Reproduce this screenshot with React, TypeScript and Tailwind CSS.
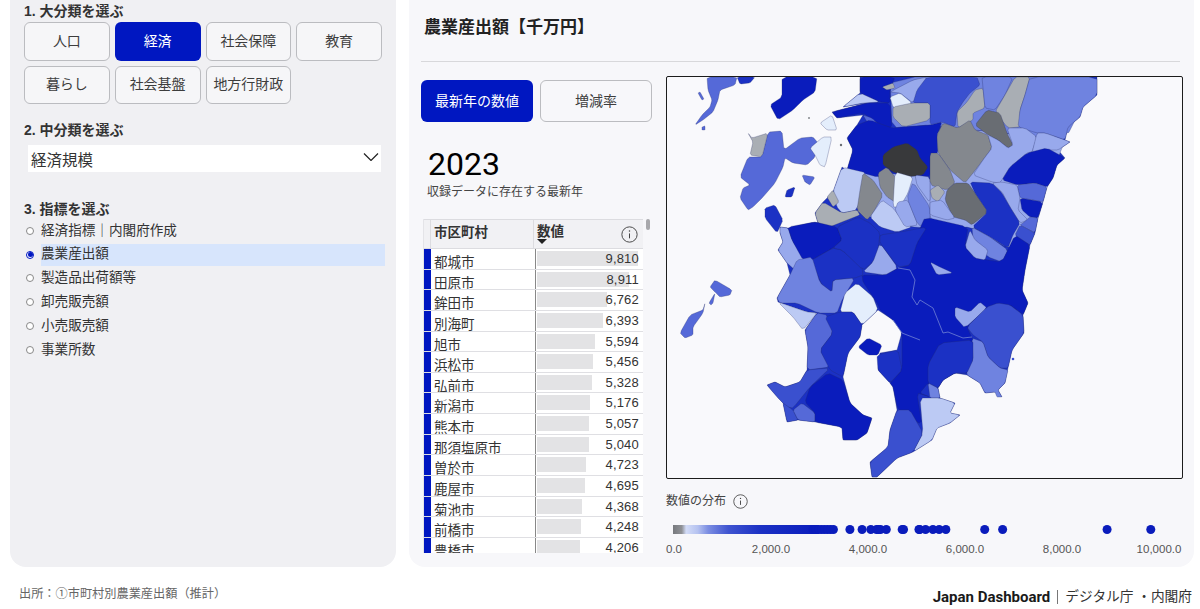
import React from "react";

const FONT = "font-['Liberation_Sans','Noto_Sans_CJK_JP',sans-serif]";

const categories = ["人口", "経済", "社会保障", "教育", "暮らし", "社会基盤", "地方行財政"];
const indicators = ["経済指標｜内閣府作成", "農業産出額", "製造品出荷額等", "卸売販売額", "小売販売額", "事業所数"];
const rows: [string, number][] = [
  ["都城市", 9810],
  ["田原市", 8911],
  ["鉾田市", 6762],
  ["別海町", 6393],
  ["旭市", 5594],
  ["浜松市", 5456],
  ["弘前市", 5328],
  ["新潟市", 5176],
  ["熊本市", 5057],
  ["那須塩原市", 5040],
  ["曽於市", 4723],
  ["鹿屋市", 4695],
  ["菊池市", 4368],
  ["前橋市", 4248],
  ["豊橋市", 4206],
];

const c1 = "#0a1cbc";
const c2 = "#1b31c4";
const c3 = "#3a50cf";
const c4 = "#5569d8";
const c5 = "#6f83e0";
const c6 = "#98a9ec";
const c7 = "#bccaf4";
const c8 = "#e4eefc";
const g1 = "#38393b";
const g2 = "#696d73";
const g3 = "#84888e";
const g4 = "#a9aeb4";

// 本土の輪郭 (隙間埋め)
const land =
  "860,77 1097,77 1097,95 1083,107 1080,117 1068,127 1065,140 1070,142 1058,150 1065,158 1057,165 1053,178 1047,187 1043,202 1038,218 1035,233 1030,245 1025,270 1022,290 1028,303 1023,315 1024,333 1012,350 1008,368 1005,383 998,390 1002,397 995,392 985,393 980,383 967,375 955,373 943,380 938,388 940,398 955,403 950,413 960,415 950,423 937,428 932,440 913,452 897,458 877,477 872,477 870,462 888,447 890,430 897,410 893,387 890,383 878,370 880,353 897,350 902,332 893,320 878,310 862,325 860,337 848,353 843,377 850,403 863,415 872,418 867,433 857,440 843,440 842,427 815,422 798,420 787,422 783,403 767,385 775,382 785,387 800,382 807,370 808,347 805,330 817,313 807,312 778,302 777,298 790,275 787,263 778,250 783,242 780,233 780,227 788,228 815,222 818,223 815,213 823,202 833,192 842,167 847,170 853,150 847,138 857,125 863,115 837,118 832,112 867,103 843,107 860,93";

// 地図の市区町村 (ページ座標)
const regions: [string, string][] = [
  [c6, "847,170 930,177 945,200 930,228 912,227 870,217 857,210"],
  [c6, "930,125 1065,140 1047,187 1038,218 1030,245 1008,248 972,227 930,228"],
  [c5, "890,77 1097,77 1065,140 930,125 892,128"],
  [c4, "707,77 737,77 735,85 720,90 718,100 713,112 703,120 695,125 702,115 710,107 712,100 708,90"],
  [c2, "737,77 755,77 750,83 740,84"],
  [c1, "782,77 817,77 815,92 803,100 793,110 778,120 770,105 782,97"],
  [c1, "860,77 895,77 890,90 890,103 880,102 860,93"],
  [g4, "882,87 893,83 895,88 887,90"],
  [c7, "843,107 860,93 880,102 863,103"],
  [c1, "832,112 867,103 890,103 892,128 880,125 863,113 837,118"],
  [c4, "863,115 872,118 882,128 877,135 870,127"],
  [c1, "870,120 892,128 903,127 930,125 942,122 937,135 938,153 930,155 930,177 915,175 895,172 877,177 863,173 847,170 853,150 847,138 857,125"],
  [g1, "883,155 893,147 907,143 917,150 920,158 928,167 923,175 907,177 893,172 883,165"],
  [c4, "768,132 782,131 784,150 800,138 813,137 818,143 815,157 807,165 793,163 785,158 783,167 775,183 763,197 753,207 748,210 740,198 743,188 750,185 740,177 748,157 762,157"],
  [g4, "748,133 752,138 768,133 762,157 750,155 753,142"],
  [c8, "810,148 823,137 832,137 825,167 820,165 815,155"],
  [c8, "820,123 832,115 837,130 827,130"],
  [c4, "802,175 815,177 810,185 805,182"],
  [c2, "787,190 795,187 792,197 785,197"],
  [c2, "765,208 775,205 783,220 777,233 765,218"],
  [c7, "833,192 842,167 867,173 857,210 842,213 837,207"],
  [g4, "827,197 833,190 839,202 833,207"],
  [g4, "815,213 823,202 842,213 857,210 860,215 847,220 827,228 818,223"],
  [g3, "863,173 873,180 883,195 873,213 867,220 857,210 860,190"],
  [g3, "878,173 887,167 900,183 895,202 887,197 880,187"],
  [c7, "870,217 882,200 893,208 900,217 912,227 897,232 880,227"],
  [c8, "895,172 913,177 908,193 900,207 893,207"],
  [c6, "898,202 908,200 918,225 905,227 895,210"],
  [c5, "913,182 930,207 930,228 918,225 907,198"],
  [c6, "915,175 930,177 930,203 917,185"],
  // 上部
  [c3, "913,90 927,77 977,77 980,85 970,93 963,102 957,112 955,127 942,122 930,125 930,103 913,103"],
  [c6, "890,92 913,80 927,77 917,90 913,103 900,93"],
  [c8, "890,97 900,93 912,103 903,113 893,107"],
  [g4, "893,107 912,103 930,103 930,120 903,127 893,117"],
  [g4, "975,90 983,88 985,108 973,113 973,120 958,128 957,112 967,102"],
  [c5, "982,77 1013,77 1005,95 995,110 985,108 983,88"],
  [g4, "1015,77 1030,77 1025,95 1020,110 1020,127 1008,128 995,112 1005,95"],
  [c5, "1030,77 1097,77 1097,95 1083,107 1080,117 1068,127 1065,140 1045,133 1037,133 1018,127 1020,110 1025,95"],
  [g2, "975,125 987,110 1000,113 1007,133 1013,145 1008,148 998,140 988,135"],
  [g3, "937,135 943,123 958,128 970,120 975,130 988,135 992,148 983,160 973,173 965,183 950,170 938,153"],
  [g3, "930,153 938,153 950,170 955,183 947,190 930,185"],
  [c6, "988,135 998,140 1008,148 1013,145 1007,128 1025,128 1037,137 1032,152 1027,153 1010,167 1000,183 992,182 973,175 983,160 992,148"],
  [c6, "1037,133 1045,133 1065,140 1070,142 1058,150 1047,150 1032,153"],
  [c1, "1047,148 1065,158 1057,165 1053,178 1047,187 1035,183 1018,185 1002,180 1010,167 1027,153"],
  [c4, "1017,185 1035,183 1047,187 1043,202 1033,200 1020,198"],
  [c1, "1020,198 1043,202 1038,218 1030,217 1022,210"],
  [c6, "992,183 1002,182 1017,185 1020,198 1018,210 1028,220 1020,223 1010,207 1002,192"],
  [c4, "1023,223 1030,217 1038,218 1035,233 1020,225"],
  [c3, "1015,235 1020,225 1035,233 1030,245 1023,242"],
  [g2, "947,190 955,183 968,183 975,193 988,212 972,225 965,220 953,217 945,200"],
  [g4, "930,190 938,185 945,192 938,202 932,198"],
  [c2, "970,182 992,183 1002,193 1010,207 1020,223 1013,235 1008,248 990,237 972,227 988,212 975,193"],
  [c5, "972,227 990,237 1008,250 1002,262 988,257 973,240"],
  [c6, "930,202 942,200 955,218 947,220 930,215"],
  // 南東部
  [c1, "917,235 925,217 968,227 965,247 975,258 1002,262 1015,235 1030,245 1025,270 1022,290 1028,303 1023,315 1010,305 987,307 967,327 973,340 973,360 967,373 955,373 943,380 938,388 928,383 920,393 930,397 917,393 922,425 898,410 893,387 890,383 902,370 902,333 893,320 880,310 877,303 863,282 862,275 885,275 898,268 910,265"],
  [c6, "965,247 970,230 975,240 988,250 985,260 975,258"],
  [c6, "930,262 940,267 953,273 937,275"],
  [c6, "955,307 970,312 980,302 987,308 965,328 955,317"],
  [c3, "967,327 987,307 998,303 1010,305 1023,315 1024,333 1012,350 1008,368 1000,368 988,357 983,342 973,335"],
  [c5, "972,338 983,342 988,357 1000,368 1008,370 1005,383 998,390 1002,397 997,397 995,392 985,393 980,383 967,375 967,368 973,360"],
  [c2, "940,343 973,340 973,360 967,373 955,373 943,380 938,388 928,383 928,365"],
  [c5, "928,383 938,388 940,398 930,398"],
  [c7, "920,398 940,398 955,403 950,413 960,415 950,423 937,428 932,440 913,452 923,433"],
  [c3, "897,410 910,410 923,433 913,452 897,458 877,477 872,477 870,462 888,447 890,430"],
  // 中部
  [c6, "780,227 788,228 792,240 805,260 795,270 787,263 778,250 783,242 780,233"],
  [c1, "788,227 815,222 837,227 842,240 833,248 812,260 803,260 792,240"],
  [c2, "812,260 833,248 842,250 862,267 863,275 855,278 833,280 832,292 822,285 812,263"],
  [c2, "837,227 858,217 870,223 880,233 878,252 873,262 863,270 842,250 833,248 842,240"],
  [c6, "880,243 898,268 885,275 863,272 873,262"],
  [c2, "880,235 900,232 927,227 917,243 910,265 898,267 880,243"],
  [c5, "777,298 790,275 797,260 812,257 820,283 832,292 833,280 855,278 842,300 837,313 818,313 797,303 780,303"],
  [c8, "840,312 845,293 857,283 873,297 878,310 862,325 853,312"],
  [c7, "778,302 807,312 817,313 803,330 793,317"],
  [c4, "817,313 827,315 833,333 820,350 830,367 807,370 808,347 805,330"],
  [c2, "825,317 840,312 853,312 862,325 860,337 848,353 843,377 830,370 820,350 833,333"],
  [c3, "807,370 830,368 810,387 793,408 787,407 777,397 767,385 775,382 785,387 800,382"],
  [c3, "783,403 793,410 798,420 787,422"],
  [c4, "793,410 802,403 815,413 815,422 798,420"],
  [c1, "828,373 843,380 850,403 863,415 872,418 867,433 857,440 843,440 842,427 815,422 815,413 805,402 810,387"],
  [c1, "858,347 868,338 882,345 878,355 868,355"],
  [c2, "877,355 898,350 902,370 890,383 878,370"],
  // 離島
  [c4, "710,287 715,280 732,290 730,295 720,297 715,292"],
  [c4, "709,303 715,293 713,303 711,305"],
  [c4, "680,333 690,315 703,310 705,303 703,313 693,327 693,335 685,338"],
  [c4, "698,93 700,92 704,99 702,100"],
  [c4, "702,127 705,126 705,130 702,130"],
];

const rivers = [
  "920,300 933,308 943,333 948,332 963,338 972,337",
  "898,268 910,270 915,280 912,297 917,305 920,300",
  "893,320 902,333 920,340",
];

// 角を少し丸める
function smooth(points: string) {
  const p = points.split(" ").map((s) => s.split(",").map(Number));
  const out: string[] = [];
  p.forEach((a, i) => {
    const b = p[(i + 1) % p.length];
    out.push(`${a[0] * 0.88 + b[0] * 0.12},${a[1] * 0.88 + b[1] * 0.12}`);
    out.push(`${a[0] * 0.12 + b[0] * 0.88},${a[1] * 0.12 + b[1] * 0.88}`);
  });
  return out.join(" ");
}

const dots = [3620, 3870, 4050, 4168, 4206, 4248, 4368, 4695, 4723, 5040, 5057, 5176, 5328, 5456, 5594, 6393, 6762, 8911, 9810];
const denseDots = [2860, 2920, 2980, 3040, 3100, 3160, 3220, 3280];
const ticks = ["0.0", "2,000.0", "4,000.0", "6,000.0", "8,000.0", "10,000.0"];

function InfoIcon({ className }: { className: string }) {
  return (
    <svg viewBox="0 0 16 16" className={className} fill="none" stroke="#444">
      <circle cx="8" cy="8" r="7.2" strokeWidth="0.9" />
      <path d="M8 7v4.6" strokeWidth="1" />
      <circle cx="8" cy="4.7" r="0.7" fill="#444" stroke="none" />
    </svg>
  );
}

function CategoryButtons() {
  return (
    <div className="grid grid-cols-4 gap-[5px]">
      {categories.map((name) => (
        <button
          key={name}
          className={
            name === "経済"
              ? "h-[38.5px] rounded-md bg-[#0017c1] text-[14px] text-white"
              : "h-[38.5px] rounded-md border border-[#bbbcc0] bg-[#f6f6f8] text-[14px] text-[#3d3d3d]"
          }
        >
          {name}
        </button>
      ))}
    </div>
  );
}

function IndicatorList() {
  return (
    <ul className="mt-[1px]">
      {indicators.map((name) => {
        const active = name === "農業産出額";
        return (
          <li key={name} className="flex h-[23.8px] items-center">
            <span className="flex w-[17px] shrink-0 justify-start pl-[2px]">
              <span
                className={
                  active
                    ? "flex size-[8px] items-center justify-center rounded-full border border-[#0017c1] bg-white"
                    : "size-[8px] rounded-full border border-[#888] bg-white"
                }
              >
                {active && <span className="size-[5px] rounded-full bg-[#0017c1]" />}
              </span>
            </span>
            <span
              className={
                active
                  ? "flex h-[22px] flex-1 items-center bg-[#d7e5fc] text-[13.6px] text-[#333]"
                  : "flex h-[22px] flex-1 items-center text-[13.6px] text-[#333]"
              }
            >
              {name}
            </span>
          </li>
        );
      })}
    </ul>
  );
}

function Sidebar() {
  return (
    <aside className="h-[567px] w-[386px] shrink-0 rounded-b-2xl bg-[#f0f0f3] pl-[14px] pr-[11px] pt-[2px] text-[#333]">
      <p className="mb-[2px] h-[18px] text-[14px] leading-[18px] font-bold">1. 大分類を選ぶ</p>
      <div className="pr-[3px]">
        <CategoryButtons />
      </div>
      <p className="mt-[18px] h-[17px] text-[14px] leading-[17px] font-bold">2. 中分類を選ぶ</p>
      <div className="mt-[6px] ml-[4px] mr-[4px] flex h-[27px] items-center justify-between bg-white pl-[3px] pr-[2px]">
        <span className="pt-[4px] text-[15.5px] text-[#333]">経済規模</span>
        <svg viewBox="0 0 16 8" className="mb-[3px] h-[8px] w-[16px]" fill="none" stroke="#222" strokeWidth="1.2">
          <path d="M1 .5l7 7 7-7" />
        </svg>
      </div>
      <p className="mt-[28px] h-[18px] text-[14px] leading-[18px] font-bold">3. 指標を選ぶ</p>
      <IndicatorList />
    </aside>
  );
}

function DataTable() {
  return (
    <div className="relative mt-[18px] h-[334px] w-[230px] overflow-hidden">
      <div className="ml-[2px] w-[220px] border-l border-[#e4e4e8] text-[#333]">
        <div className="flex h-[30px] border-t border-b border-[#dcdce0] bg-[#f1f1f4]">
          <div className="w-[7px] border-r border-[#dcdce0]" />
          <div className="w-[103px] border-r border-[#dcdce0] pl-[3px] pt-[3px] text-[13.5px] font-bold">市区町村</div>
          <div className="relative flex-1 pl-[3px] pt-[2px] text-[13.5px] font-bold">
            数値
            <span className="absolute left-[3px] top-[19px] h-0 w-0 border-x-[5px] border-t-[5px] border-x-transparent border-t-[#222]" />
            <InfoIcon className="absolute right-[5px] top-[6px] size-[17px]" />
          </div>
        </div>
        {rows.map(([city, value]) => (
          <div key={city} className="flex h-[20.64px] border-b border-[#dfdfe3] bg-white">
            <div className="w-[7px] bg-[#0017c1]" />
            <div className="w-[104px] overflow-hidden pl-[3px] pt-[5px] text-[13.5px] leading-[18px] whitespace-nowrap">{city}</div>
            <div className="relative flex-1 border-l border-[#888]">
              <div className="absolute left-[1px] top-[2px] h-[15px] bg-[#e3e3e5]" style={{ width: value * 0.0103 }} />
              <span className="absolute right-[4px] top-[1px] text-[13px] leading-[17px] tracking-[0.2px]">{value.toLocaleString("en-US")}</span>
            </div>
          </div>
        ))}
      </div>
      <div className="absolute right-[1px] top-0 h-[11px] w-[4px] rounded-full bg-[#a8a8ac]" />
    </div>
  );
}

function JapanMap() {
  return (
    <div className="h-[403px] w-[517px] overflow-hidden rounded-[2px] border border-[#1c1c1c] bg-[#f9f9fc]">
      <svg viewBox="667 77 515 401" className="h-full w-full">
        <polygon points={land} fill={c2} stroke="#232a66" strokeOpacity="0.55" strokeWidth="0.5" />
        {regions.map(([fill, points], i) => (
          <polygon key={i} points={smooth(points)} fill={fill} stroke="#232a66" strokeOpacity="0.55" strokeWidth="0.5" strokeLinejoin="round" />
        ))}
        {rivers.map((points) => (
          <polyline key={points} points={points} fill="none" stroke="#8090d8" strokeWidth="0.7" />
        ))}
        <circle cx="1013" cy="359" r="1.3" fill={c3} />
        <circle cx="809" cy="118" r="1" fill={g3} />
        <circle cx="841" cy="145" r="1.2" fill={g2} />
      </svg>
    </div>
  );
}

function Distribution() {
  const x = (v: number) => 8 + v * 0.0486;
  return (
    <div className="mt-[13px] w-[517px]">
      <div className="flex h-[18px] items-center gap-[7px] text-[12px] text-[#444]">
        <span>数値の分布</span>
        <InfoIcon className="size-[15px]" />
      </div>
      <svg viewBox="0 0 517 20" className="mt-[10px] h-[20px] w-[517px]">
        <defs>
          <linearGradient id="dense" x1="0" x2="1" y1="0" y2="0">
            <stop offset="0" stopColor="#77797d" />
            <stop offset="0.06" stopColor="#8f9196" />
            <stop offset="0.09" stopColor="#d3dcf7" />
            <stop offset="0.17" stopColor="#b5c2f0" />
            <stop offset="0.24" stopColor="#7c8ee2" />
            <stop offset="0.38" stopColor="#3f54d0" />
            <stop offset="0.6" stopColor={c2} />
            <stop offset="1" stopColor={c1} />
          </linearGradient>
        </defs>
        <rect x="7" y="5" width="146" height="9" fill="url(#dense)" />
        {denseDots.concat(dots).map((v) => (
          <circle key={v} cx={x(v)} cy="9.5" r="4.5" fill={c1} />
        ))}
      </svg>
      <div className="relative mt-[1px] h-[14px] text-[11.5px] text-[#555]">
        {ticks.map((t, i) => (
          <span key={t} className="absolute top-0 -translate-x-1/2" style={{ left: 8 + i * 97 }}>
            {t}
          </span>
        ))}
      </div>
    </div>
  );
}

function MainPanel() {
  return (
    <main className="h-[567px] w-[785px] shrink-0 rounded-b-2xl bg-[#f7f7fa] pl-[12px] pr-[11px]">
      <h1 className="mr-[3px] flex h-[62px] items-center border-b border-[#d8d8db] pl-[3px] pb-[6px] text-[17px] font-bold text-[#222]">
        農業産出額【千万円】
      </h1>
      <div className="mt-[14px] flex gap-[12px]">
        <div className="w-[233px] shrink-0">
          <div className="mt-[4px] flex gap-[7px]">
            <button className="h-[42px] w-[112px] rounded-md bg-[#0017c1] text-[14px] text-white">最新年の数値</button>
            <button className="h-[42px] w-[112px] rounded-md border border-[#bbbcc0] bg-[#f7f7fa] text-[14px] text-[#3d3d3d]">増減率</button>
          </div>
          <p className="mt-[23px] pl-[7px] font-['Roboto',sans-serif] text-[32px] leading-[38px] text-black">2023</p>
          <p className="pl-[6px] text-[12px] text-[#444]">収録データに存在する最新年</p>
          <DataTable />
        </div>
        <div>
          <JapanMap />
          <Distribution />
        </div>
      </div>
    </main>
  );
}

export default function App() {
  return (
    <div className={`flex h-[609px] w-[1200px] flex-col overflow-hidden bg-white ${FONT}`}>
      <div className="flex gap-[13px] pl-[10px] pr-[6px]">
        <Sidebar />
        <MainPanel />
      </div>
      <footer className="flex flex-1 items-center justify-between pl-[19px] pr-[8px] pt-[18px]">
        <span className="mb-[5px] text-[12.2px] text-[#666]">出所：①市町村別農業産出額（推計）</span>
        <span className="flex items-center text-[13.7px] text-[#333]">
          <span className="font-['Roboto',sans-serif] text-[15px] font-bold text-[#1a1a1a]">Japan Dashboard</span>
          <span className="mx-[7px] h-[14px] w-px bg-[#777]" />
          デジタル庁 ・内閣府
        </span>
      </footer>
    </div>
  );
}
